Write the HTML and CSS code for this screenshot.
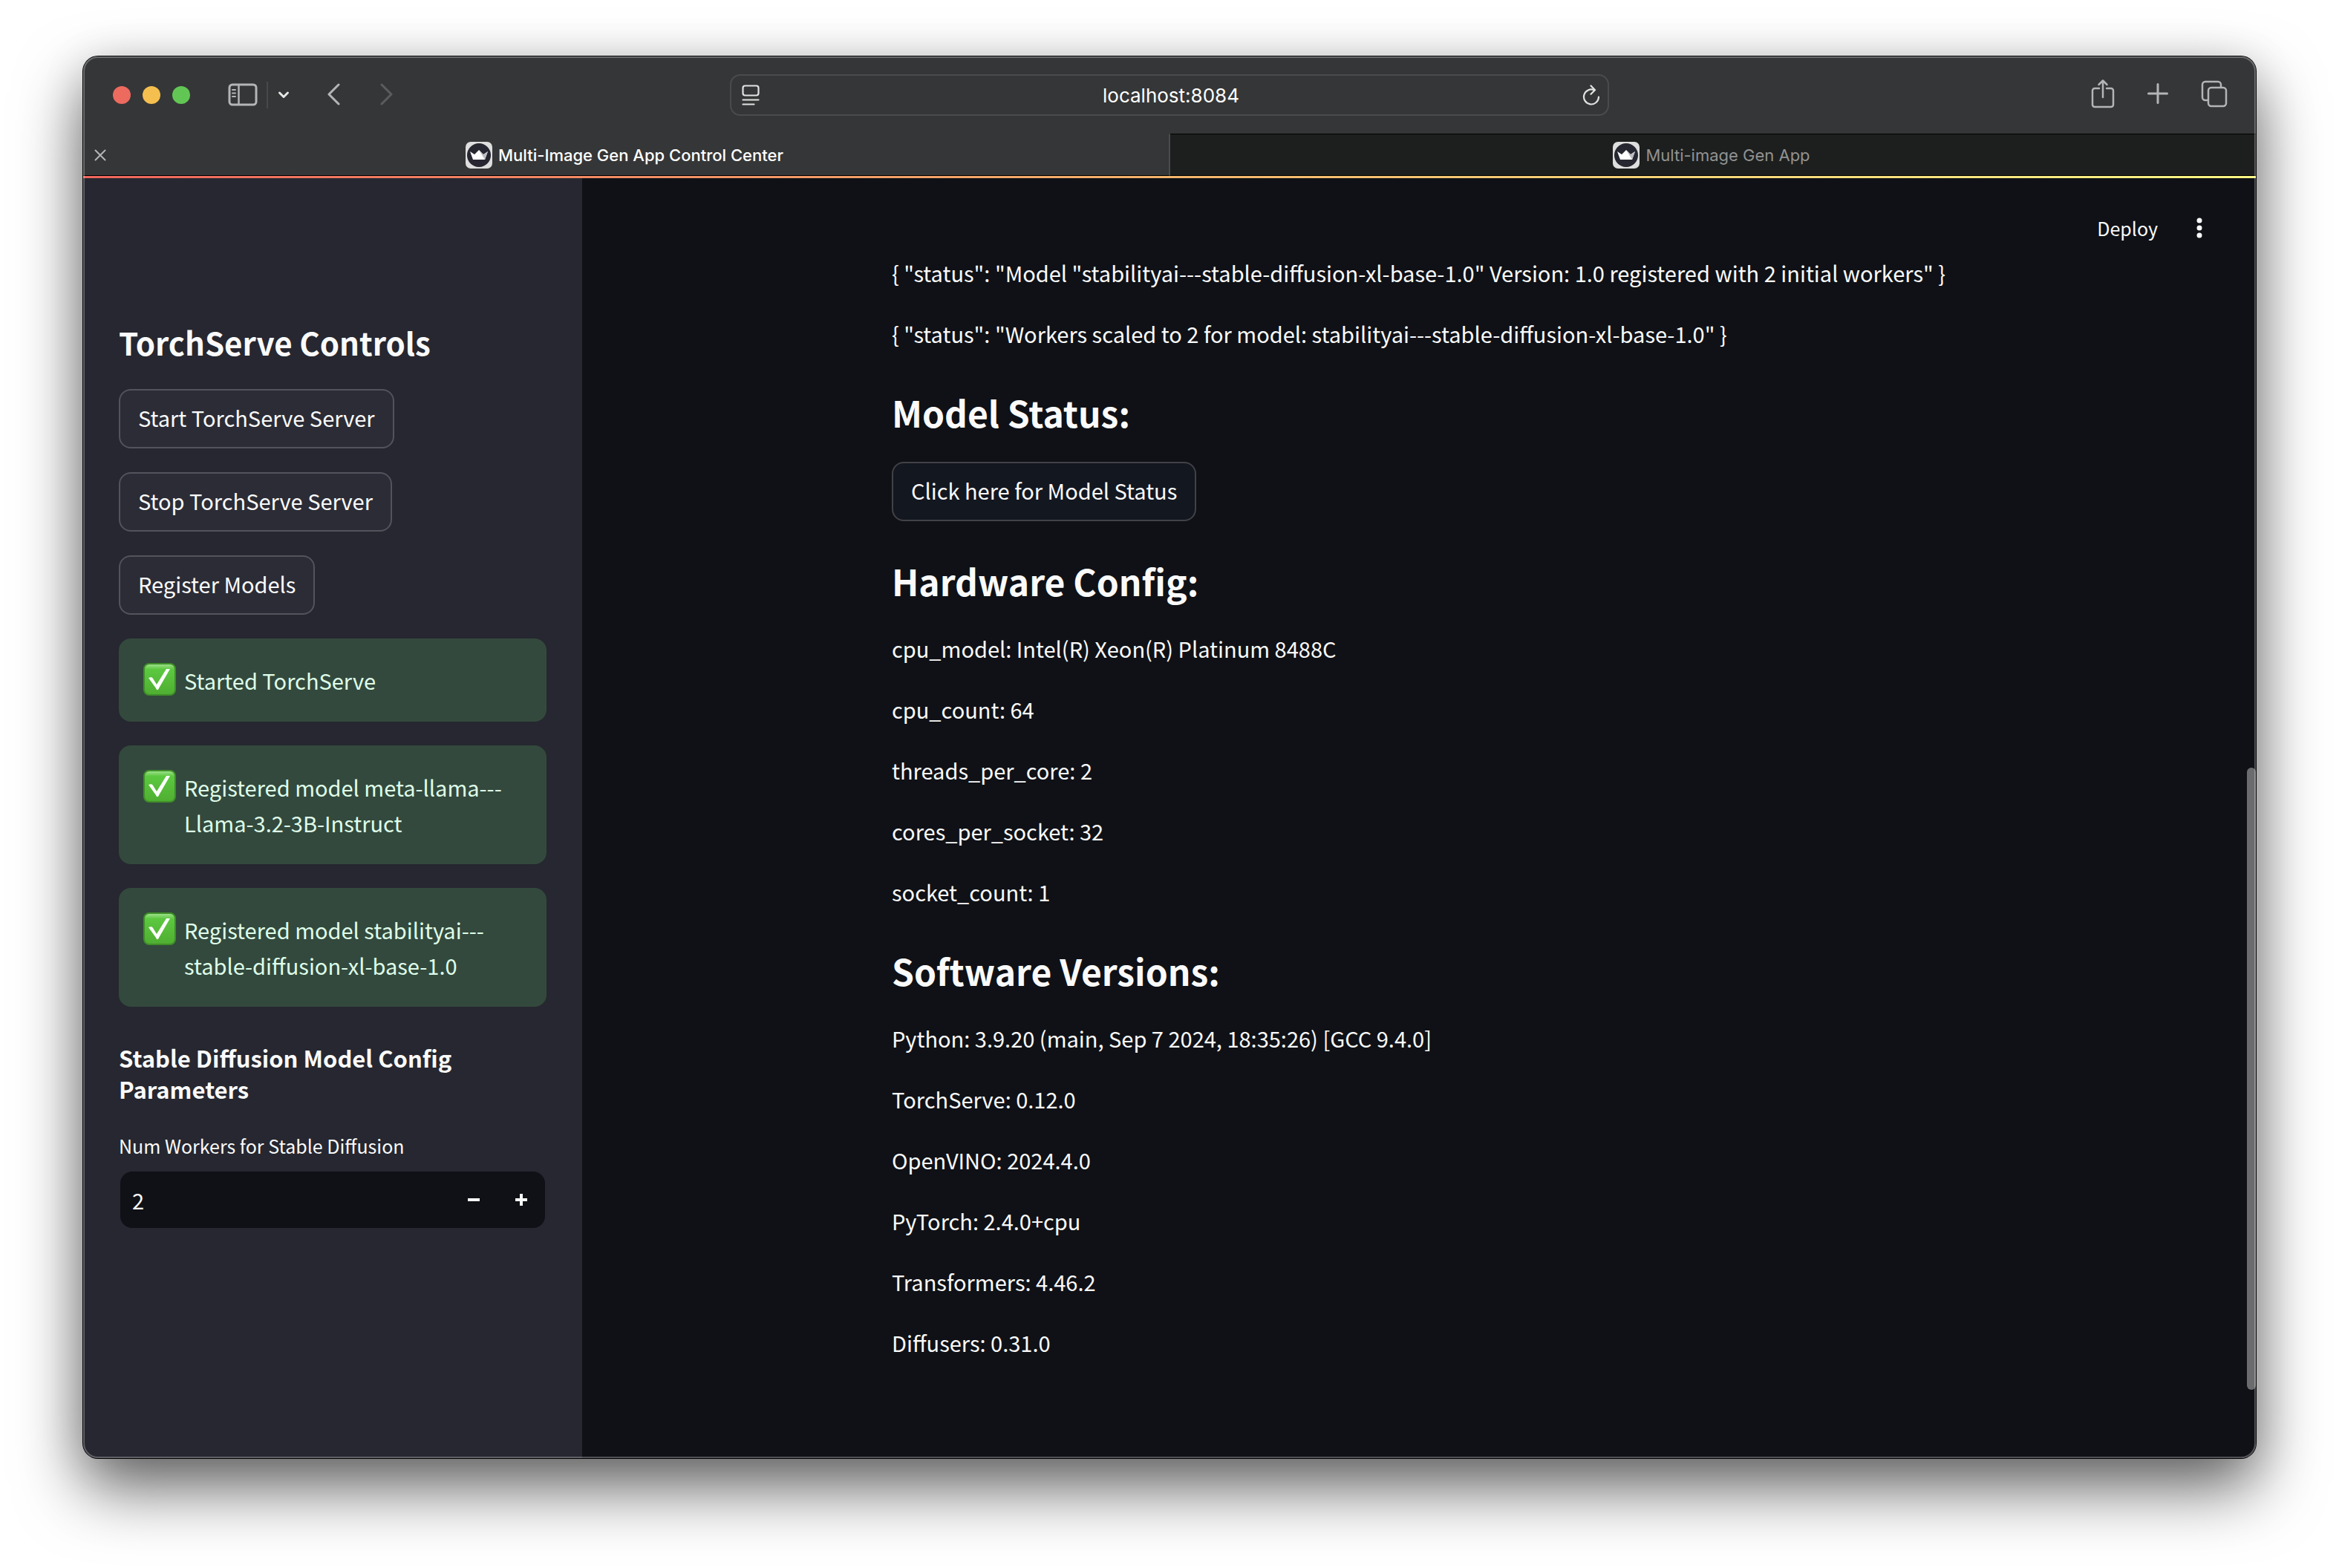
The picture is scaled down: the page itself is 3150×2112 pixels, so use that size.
FILE: index.html
```html
<!DOCTYPE html>
<html lang="en">
<head>
<meta charset="utf-8">
<title>Multi-Image Gen App Control Center</title>
<link rel="stylesheet" href="styles.css">
</head>
<body>
<div class="window">
  <header class="toolbar">
    <div class="toolbar-left">
      <div class="lights"><span class="light close"></span><span class="light minimise"></span><span class="light expand"></span></div>
      <button class="icon-button sidebar-toggle" aria-label="Toggle sidebar"><svg width="40" height="32" viewBox="0 0 40 32" fill="none" stroke="currentColor" stroke-width="3"><rect x="2" y="2" width="36" height="27" rx="4"/><path d="M14.500 2v27" stroke-width="2.500"/><path d="M6 9h4M6 13.500h4M6 18h4" stroke-width="2" stroke-linecap="round"/></svg></button>
      <span class="toolbar-rule"></span>
      <button class="icon-button menu-toggle" aria-label="Tab groups"><svg width="16" height="12" viewBox="0 0 16 12" fill="none" stroke="currentColor" stroke-width="3" stroke-linecap="round" stroke-linejoin="round"><path d="M2.500 3L8 8.500L13.500 3"/></svg></button>
      <button class="icon-button back" aria-label="Back"><svg width="20" height="32" viewBox="0 0 20 32" fill="none" stroke="currentColor" stroke-width="3" stroke-linecap="round" stroke-linejoin="round"><path d="M17 2L4 15L17 28"/></svg></button>
      <button class="icon-button forward" aria-label="Forward" disabled><svg width="20" height="32" viewBox="0 0 20 32" fill="none" stroke="currentColor" stroke-width="3" stroke-linecap="round" stroke-linejoin="round"><path d="M3 2L16 15L3 28"/></svg></button>
    </div>
    <div class="address">
      <button class="icon-button" aria-label="Page menu"><svg width="24" height="28" viewBox="0 0 24 28" fill="none" stroke="currentColor" stroke-width="2.200" stroke-linecap="round"><rect x="1.500" y="1.500" width="21" height="13" rx="3"/><path d="M1.500 20.500h21M1.500 26.500h15"/></svg></button>
      <input class="address-input" type="text" aria-label="Address" value="localhost:8084">
      <button class="icon-button" aria-label="Reload"><svg width="24" height="28" viewBox="0 0 24 28" fill="none" stroke="currentColor" stroke-width="2.200" stroke-linecap="round" stroke-linejoin="round"><path d="M16 7.300A10 10 0 1 0 22 16.500"/><path d="M11.500 1.500L17 7.300L11.500 12.800"/></svg></button>
    </div>
    <div class="toolbar-right">
      <button class="icon-button" aria-label="Share"><svg width="32" height="40" viewBox="0 0 32 40" fill="none" stroke="currentColor" stroke-width="2.500" stroke-linecap="round" stroke-linejoin="round"><path d="M11 13H5a3 3 0 0 0-3 3v19a3 3 0 0 0 3 3h22a3 3 0 0 0 3-3V16a3 3 0 0 0-3-3h-6"/><path d="M16 25V3M10.500 8L16 2.500L21.500 8"/></svg></button>
      <button class="icon-button" aria-label="New tab"><svg width="28" height="40" viewBox="0 0 28 40" fill="none" stroke="currentColor" stroke-width="3" stroke-linecap="round"><path d="M14 7.500v25M1.500 20h25"/></svg></button>
      <button class="icon-button" aria-label="Show tabs"><svg width="36" height="40" viewBox="0 0 36 40" fill="none" stroke="currentColor" stroke-width="2.500"><rect x="10" y="12" width="24" height="25" rx="4"/><path d="M10 29H6a4 4 0 0 1-4-4V8a4 4 0 0 1 4-4h17a4 4 0 0 1 4 4v4"/></svg></button>
    </div>
  </header>
  <nav class="tabs">
    <div class="tab active">
      <button class="icon-button tab-close" aria-label="Close tab"><svg width="16" height="16" viewBox="0 0 16 16" fill="none" stroke="currentColor" stroke-width="2" stroke-linecap="round"><path d="M1.500 1.500l13 13M14.500 1.500l-13 13"/></svg></button>
      <svg class="favicon" viewBox="0 0 36 36"><rect width="36" height="36" rx="7" fill="#dedede"/><circle cx="18" cy="18" r="16" fill="#262730"/><path d="M6 13l6 4l6-6l6 6l6-4l-4 11H10z" fill="#fff"/><path d="M18 11l6 6l6-4l-4 11z" fill="#bdbdc3"/></svg>
      <a class="tab-title" href="#control">Multi-Image Gen App Control Center</a>
    </div>
    <div class="tab">
      <svg class="favicon" viewBox="0 0 36 36"><rect width="36" height="36" rx="7" fill="#dedede"/><circle cx="18" cy="18" r="16" fill="#262730"/><path d="M6 13l6 4l6-6l6 6l6-4l-4 11H10z" fill="#fff"/><path d="M18 11l6 6l6-4l-4 11z" fill="#bdbdc3"/></svg>
      <a class="tab-title" href="#app">Multi-image Gen App</a>
    </div>
  </nav>
  <div class="decoration"></div>
  <div class="app">
    <aside class="sidebar">
      <h2 class="sidebar-title">TorchServe Controls</h2>
      <button class="button">Start TorchServe Server</button>
      <button class="button">Stop TorchServe Server</button>
      <button class="button">Register Models</button>
      <div class="alert"><svg class="check" viewBox="0 0 44 44"><use href="#check"/></svg><p>Started TorchServe</p></div>
      <div class="alert"><svg class="check" viewBox="0 0 44 44"><use href="#check"/></svg><p>Registered model meta-llama---Llama-3.2-3B-Instruct</p></div>
      <div class="alert"><svg class="check" viewBox="0 0 44 44"><use href="#check"/></svg><p>Registered model stabilityai---stable-diffusion-xl-base-1.0</p></div>
      <h3 class="sidebar-subtitle">Stable Diffusion Model Config Parameters</h3>
      <div class="field">
        <label class="field-label" for="workers">Num Workers for Stable Diffusion</label>
        <div class="number">
          <input class="number-input" id="workers" type="text" inputmode="numeric" value="2">
          <button class="step" aria-label="Decrease"><svg width="16" height="20" viewBox="0 0 16 20"><path d="M0 8h16v4H0z" fill="currentColor"/></svg></button>
          <button class="step" aria-label="Increase"><svg width="16" height="20" viewBox="0 0 16 20"><path d="M0 8h6V2h4v6h6v4h-6v6H6v-6H0z" fill="currentColor"/></svg></button>
        </div>
      </div>
    </aside>
    <main class="main">
      <div class="app-actions">
        <button class="deploy">Deploy</button>
        <button class="icon-button kebab" aria-label="Main menu"><svg width="8" height="28" viewBox="0 0 8 28" fill="currentColor"><circle cx="4" cy="4" r="3.500"/><circle cx="4" cy="14" r="3.500"/><circle cx="4" cy="24" r="3.500"/></svg></button>
      </div>
      <div class="content">
        <p>{ "status": "Model "stabilityai---stable-diffusion-xl-base-1.0" Version: 1.0 registered with 2 initial workers" }</p>
        <p>{ "status": "Workers scaled to 2 for model: stabilityai---stable-diffusion-xl-base-1.0" }</p>
        <h2 class="section-title">Model Status:</h2>
        <button class="button">Click here for Model Status</button>
        <h2 class="section-title">Hardware Config:</h2>
        <p>cpu_model: Intel(R) Xeon(R) Platinum 8488C</p>
        <p>cpu_count: 64</p>
        <p>threads_per_core: 2</p>
        <p>cores_per_socket: 32</p>
        <p>socket_count: 1</p>
        <h2 class="section-title">Software Versions:</h2>
        <p>Python: 3.9.20 (main, Sep 7 2024, 18:35:26) [GCC 9.4.0]</p>
        <p>TorchServe: 0.12.0</p>
        <p>OpenVINO: 2024.4.0</p>
        <p>PyTorch: 2.4.0+cpu</p>
        <p>Transformers: 4.46.2</p>
        <p>Diffusers: 0.31.0</p>
      </div>
      <div class="scroll-thumb"></div>
    </main>
  </div>
</div>
<svg class="defs" width="0" height="0" aria-hidden="true">
  <defs>
    <linearGradient id="green" x1="0" y1="0" x2="0" y2="1"><stop offset="0" stop-color="#a5e393"/><stop offset=".18" stop-color="#5cc840"/><stop offset="1" stop-color="#4fae31"/></linearGradient>
    <g id="check"><rect x="1" y="1" width="42" height="42" rx="7" fill="url(#green)" stroke="#3f8f29" stroke-width="2"/><path d="M7 20c3-1 5-1 6 1l5 8L31 8h5L21 34c-1 3-3 3-4 0z" fill="#fff"/></g>
  </defs>
</svg>
</body>
</html>
```
FILE: styles.css
```css
* { box-sizing: border-box; }
body {
  margin: 0;
  min-height: 100vh;
  padding: 76px 112px 148px;
  display: flex;
  background: #fff;
  color: #fafafa;
  font-family: "Noto Sans CJK JP", "Noto Sans", sans-serif;
  font-size: 29px;
  line-height: 48px;
}
p, h2, h3 { margin: 0; }
button, input { font: inherit; color: inherit; }
.defs { position: absolute; }

.window {
  flex: 1;
  display: flex;
  flex-direction: column;
  position: relative;
  border-radius: 20px;
  overflow: hidden;
  background: #0f1116;
}
body::before {
  content: "";
  position: absolute;
  inset: 76px 112px 148px;
  border-radius: 20px;
  box-shadow: 0 0 0 1px #000, 0 40px 88px rgba(0, 0, 0, .6), 0 8px 60px rgba(0, 0, 0, .12);
}
.window::after {
  content: "";
  position: absolute;
  inset: 0;
  border-radius: 20px;
  border: 2px solid rgba(255, 255, 255, .27);
  pointer-events: none;
}

.icon-button {
  display: flex;
  padding: 0;
  border: 0;
  background: none;
  color: #b4b5b6;
}
.toolbar {
  display: grid;
  grid-template-columns: 1fr 1184px 1fr;
  align-items: center;
  height: 104px;
  background: #353637;
}
.toolbar-left { display: flex; align-items: center; padding-left: 40px; }
.lights { display: flex; gap: 16px; }
.light { width: 24px; height: 24px; border-radius: 50%; }
.close { background: #ed6a5f; }
.minimise { background: #f5bf4f; }
.expand { background: #62c655; }
.sidebar-toggle { margin-left: 51px; }
.toolbar-rule { width: 2px; height: 36px; margin: 0 13px 0 12px; background: #484949; }
.menu-toggle { color: #e6e6e6; }
.back { margin-left: 49px; }
.forward { margin-left: 52px; }
.forward:disabled { color: #5b5c5d; }
.address {
  display: flex;
  align-items: center;
  height: 56px;
  padding: 0 10px 0 14px;
  border: 2px solid #4a4b4d;
  border-radius: 14px;
}
.address .icon-button { color: #e2e2e2; }
.address-input {
  flex: 1;
  min-width: 0;
  padding: 2px 0 0;
  border: 0;
  outline: 0;
  background: none;
  text-align: center;
  color: #fff;
  font-family: Inter, sans-serif;
  font-size: 26px;
}
.toolbar-right { display: flex; justify-content: flex-end; gap: 44px; padding: 0 38px 4px 0; }

.tabs { display: flex; height: 57px; }
.tab {
  position: relative;
  flex: 1;
  display: flex;
  align-items: center;
  justify-content: center;
  gap: 8px;
  padding-right: 4px;
  background: #1d1f1e;
  border-top: 1px solid #000;
  border-bottom: 1px solid #000;
  color: #919292;
  font-family: Inter, sans-serif;
  font-size: 22px;
  line-height: 28px;
}
.active {
  border-top-color: #353637;
  border-right: 2px solid #4a4b4b;
  background: #353637;
  color: #fff;
  font-weight: 500;
}
.tab-close { position: absolute; left: 15px; }
.favicon { width: 36px; height: 36px; }
.tab-title { color: inherit; text-decoration: none; }
.decoration { height: 3px; background: linear-gradient(90deg, #f0655c, #f5b56c 50%, #f9f784); }

.app { flex: 1; display: flex; }
.sidebar {
  width: 672px;
  padding: 192px 48px 48px;
  background: #262730;
}
.sidebar-title { font-size: 42px; line-height: 58px; margin-bottom: 34px; }
.button {
  display: block;
  height: 80px;
  margin-bottom: 32px;
  padding: 0 24px 4px;
  border: 2px solid #52535b;
  border-radius: 16px;
  background: #2b2c36;
}
.content .button { background: #131720; border-color: #414247; }
.alert {
  display: flex;
  gap: 11px;
  padding: 32px 32px 32px 33px;
  margin-bottom: 32px;
  border-radius: 16px;
  background: #33493d;
  color: #dffde9;
}
.check { flex: none; width: 44px; height: 46px; }
.sidebar-subtitle { margin-top: 48px; font-size: 31px; line-height: 42px; }
.field { margin-top: 34px; }
.field-label { display: block; font-size: 25px; line-height: 42px; margin-bottom: 14px; }
.number {
  display: flex;
  height: 76px;
  margin: 0 2px;
  border-radius: 16px;
  overflow: hidden;
  background: #0f1116;
}
.number-input { flex: 1; min-width: 0; padding: 0 16px; border: 0; outline: 0; background: none; }
.step { display: grid; place-items: center; width: 64px; padding: 0; border: 0; background: none; }

.main { position: relative; flex: 1; display: flex; flex-direction: column; align-items: center; }
.app-actions {
  position: absolute;
  top: 43px;
  right: 72px;
  display: flex;
  align-items: center;
  gap: 52px;
}
.deploy { padding: 0; border: 0; background: none; font-size: 25px; line-height: 48px; }
.kebab { color: #fafafa; }
.content { width: 1420px; padding-top: 103px; }
.content p { margin-bottom: 34px; }
.section-title { font-size: 48px; line-height: 60px; padding-top: 18px; margin-bottom: 37px; }
.scroll-thumb {
  position: absolute;
  right: 0;
  top: 794px;
  width: 12px;
  height: 838px;
  border-radius: 6px;
  background: #6b6c6e;
}
```
